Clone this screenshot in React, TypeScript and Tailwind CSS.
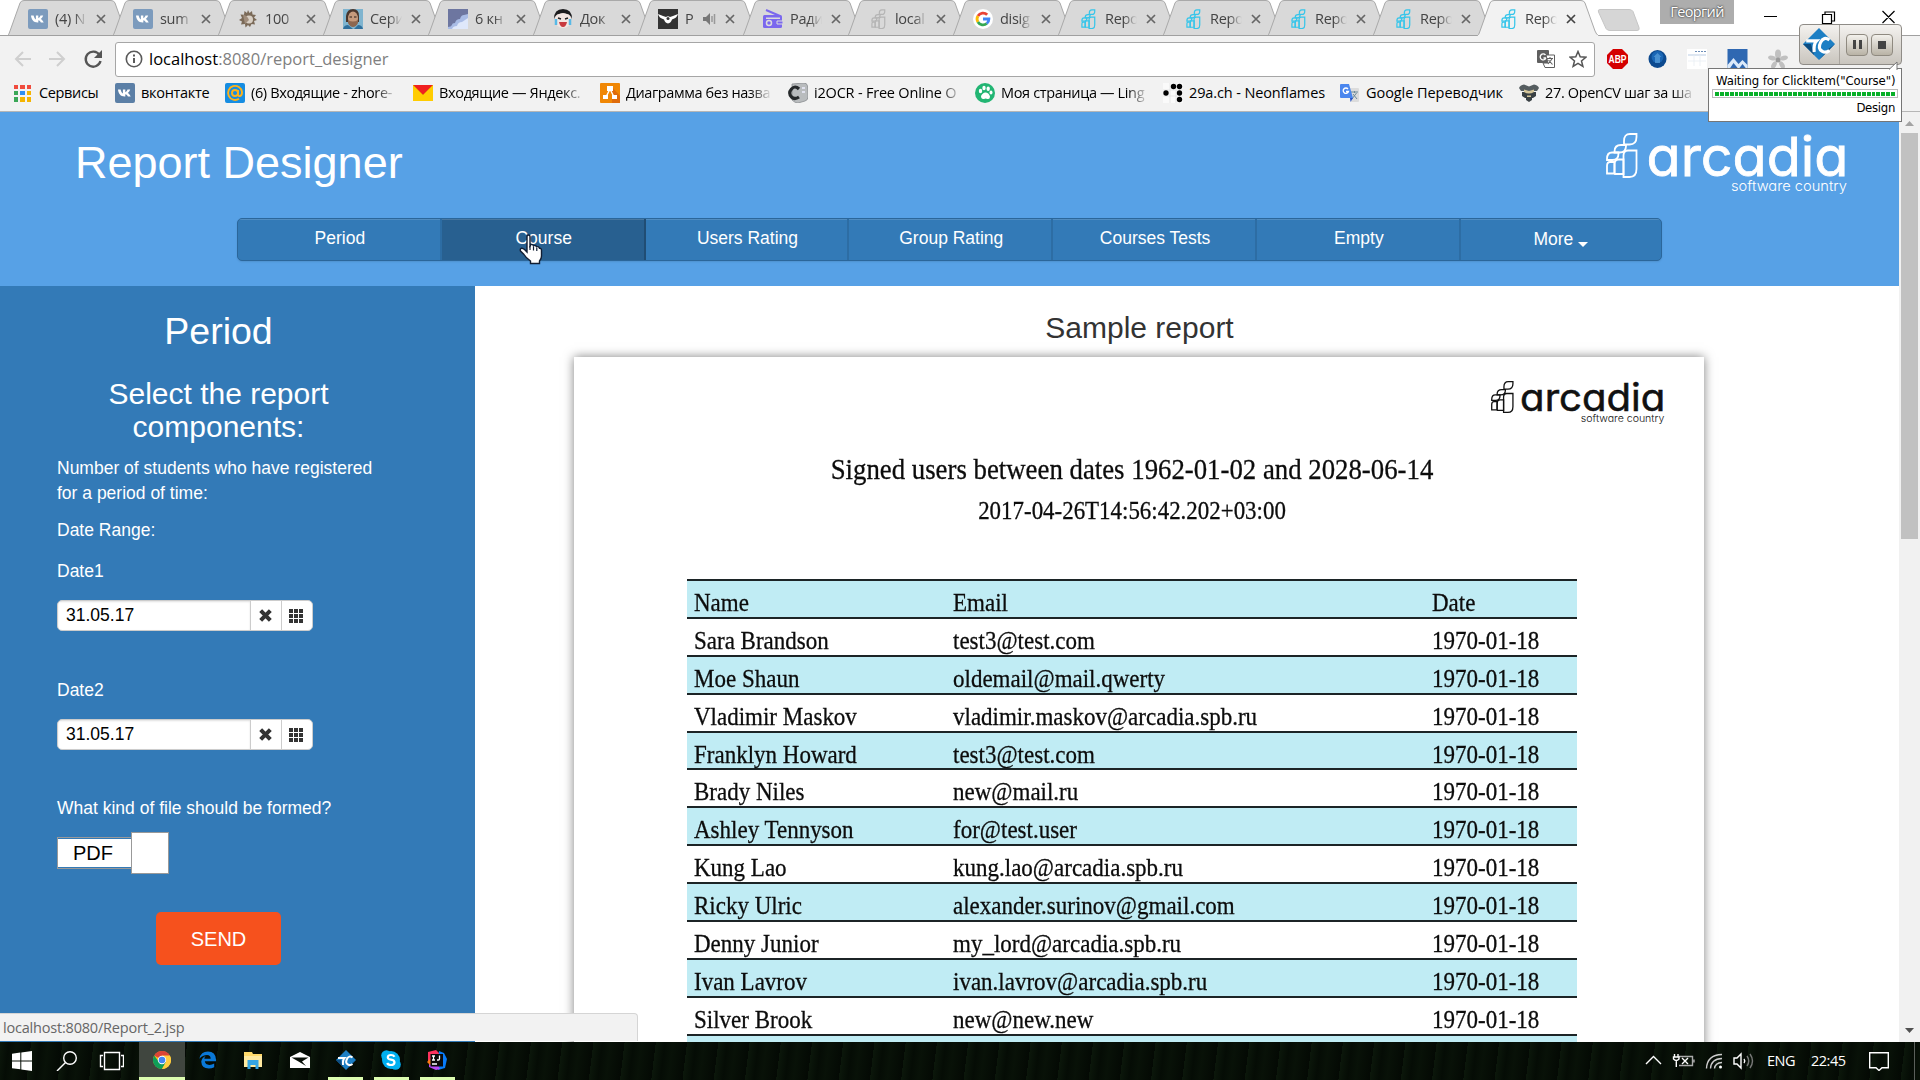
import React from "react";

const UI = "font-['Open_Sans','Noto_Sans',sans-serif]";

/* ---------- small icons ---------- */

const VK = ({ c = "#5b7fa6" }: { c?: string }) => (
  <svg width="20" height="20" viewBox="0 0 20 20">
    <rect width="20" height="20" rx="2" fill={c} />
    <path d="M3 6.5h2.6c.5 2.2 1.500 3.700 2.300 4V6.500H10.300v2.700c1-.3 1.700-1.400 2.200-2.700h2.700c-.5 1.500-1.300 2.700-2.500 3.500 1.300.7 2.400 1.900 3 3.500h-2.800c-.5-1.100-1.300-2-2.600-2.200v2.200h-.8C5.700 13.500 3.300 10.700 3 6.500z" fill="#fff" />
  </svg>
);

const Gear = () => (
  <svg width="20" height="20" viewBox="0 0 20 20">
    <path d="M10 1l1.500 3L14 2l.5 3.500L18 6l-2 2.500 3 2.500-3 1 1 3.500-3.500-.5L12 18l-2-2-2.500 2.500L7 15l-4 .5 1-3-3-1.500 3-2L2.500 5.500 6 5.700 6.500 2 9 4z" fill="#7b6a58" />
    <circle cx="11" cy="10.500" r="4" fill="#d8cfc4" />
    <path d="M5 6q4 0 6 5l-4 4z" fill="#a08d7c" />
  </svg>
);

const Portrait = () => (
  <svg width="20" height="20" viewBox="0 0 20 20">
    <rect width="20" height="20" fill="#7fb4cf" />
    <path d="M3 7Q4 0 10 0t6 7v6H3z" fill="#4a362c" />
    <ellipse cx="10" cy="9.500" rx="5" ry="7" fill="#c69a7c" />
    <path d="M5 11q5 3 10 0v3q-2 4-5 4t-5-4z" fill="#8d6750" />
    <path d="M6.500 8h2.500M11 8h2.500" stroke="#2b1d17" strokeWidth="1.200" />
    <path d="M0 20q1-4 5-4l5 4zM20 20q-1-4-5-4l-4 4z" fill="#2f6f9c" />
  </svg>
);

const Cloud = () => (
  <svg width="20" height="20" viewBox="0 0 20 20">
    <rect width="20" height="20" fill="#6d76a0" />
    <path d="M0 20v-2q3 0 4-2 0-2 3-2 1-4 5-4 1-4 4-4l4-1v15z" fill="#a9bce6" />
    <path d="M4 20q1-3 5-3 1-4 5-4l6-4v11z" fill="#dfe8fb" />
  </svg>
);

const CryFace = () => (
  <svg width="20" height="20" viewBox="0 0 20 20">
    <circle cx="10" cy="11" r="8" fill="#f3e6e2" />
    <path d="M1 10Q1 0 10 0t9 10q-2-5-5-5-4-2-8 0-3 0-5 5z" fill="#1d1d1f" />
    <path d="M5 9l3 1M15 9l-3 1" stroke="#222" strokeWidth="1.500" />
    <path d="M6 13h8q-1 5-4 5t-4-5z" fill="#c83a3f" />
    <path d="M3 10v6M17 10v6" stroke="#58b9e6" strokeWidth="2.500" />
  </svg>
);

const Wings = () => (
  <svg width="20" height="20" viewBox="0 0 20 20">
    <rect width="20" height="20" fill="#333" />
    <path d="M0 5l5 2 3 1q2-1.500 4 0l3-1 5-2q-1 4-6 5.500-1 3.500-4 4-3-.5-4-4Q1 9 0 5z" fill="#fff" />
    <circle cx="10" cy="9.500" r="1.500" fill="#333" />
  </svg>
);

const Radio = () => (
  <svg width="20" height="20" viewBox="0 0 20 20">
    <path d="M3 1l14 6" stroke="#7b68ee" strokeWidth="2" />
    <rect y="6" width="19" height="13" rx="1.500" fill="#7b68ee" />
    <circle cx="6" cy="14" r="2.500" fill="none" stroke="#dcdcdc" strokeWidth="1.500" />
    <path d="M3 8.500h14v1.500H3z" fill="#dcdcdc" />
    <path d="M14 12h6v3h-6z" fill="#7b68ee" stroke="#dcdcdc" />
  </svg>
);

const Google = () => (
  <svg width="20" height="20" viewBox="0 0 20 20">
    <circle cx="10" cy="10" r="10" fill="#fff" />
    <g fill="none" strokeWidth="2.800">
      <path d="M14.200 5.800A5.900 5.900 0 0 0 4.900 7" stroke="#ea4335" />
      <path d="M4.900 7a5.900 5.900 0 0 0 0 6" stroke="#fbbc05" />
      <path d="M4.900 13a5.900 5.900 0 0 0 8.900 1.500" stroke="#34a853" />
      <path d="M13.800 14.500A5.900 5.900 0 0 0 15.900 10H10" stroke="#4285f4" />
    </g>
  </svg>
);

const LeafPaths = () => (
  <>
    <path d="M18 11V8q0-7 6-7h6.500v3q0 7.500-7 7.500H18z" />
    <path d="M8.500 19.500v-1q0-6.500 6.500-6.500h5v1q0 6.500-6.500 6.500z" />
    <path d="M1 27v-1q0-6.500 5-6.500h6.500v1q0 6.500-6 6.500z" />
    <path d="M17.500 44V22.500q0-5 4.500-5h8.500V36q0 8-7 8z" />
    <path d="M8.500 40.500V31q0-4.500 4-4.500h5V41H9z" />
    <path d="M1 39.500V33q0-4 3-4h4.500v11.500H1z" />
  </>
);

const Leaf = ({ c = "#35c5ea" }: { c?: string }) => (
  <svg width="20" height="20" viewBox="-6 -1 42 46" fill="none" stroke={c} strokeWidth="2.800">
    <LeafPaths />
  </svg>
);

const Close = ({ dark }: { dark?: boolean }) => (
  <svg width="10" height="10" viewBox="0 0 10 10" stroke={dark ? "#444" : "#666"} strokeWidth="1.700">
    <path d="M1 1l8 8M9 1l-8 8" />
  </svg>
);

/* ---------- tab strip ---------- */

type TabInfo = { icon: React.ReactNode; text: string; audio?: boolean; active?: boolean };

const tabs: TabInfo[] = [
  { icon: <VK c="#7c9bbd" />, text: "(4) N" },
  { icon: <VK c="#7c9bbd" />, text: "sum" },
  { icon: <Gear />, text: "100" },
  { icon: <Portrait />, text: "Сери" },
  { icon: <Cloud />, text: "6 кн" },
  { icon: <CryFace />, text: "Док" },
  { icon: <Wings />, text: "Р", audio: true },
  { icon: <Radio />, text: "Ради" },
  { icon: <Leaf c="#b5b5b5" />, text: "local" },
  { icon: <Google />, text: "disig" },
  { icon: <Leaf />, text: "Repo" },
  { icon: <Leaf />, text: "Repo" },
  { icon: <Leaf />, text: "Repo" },
  { icon: <Leaf />, text: "Repo" },
  { icon: <Leaf />, text: "Repo", active: true },
];

const Tab = ({ t }: { t: TabInfo }) => (
  <div className="relative -mr-[17px] flex h-9 w-[122px] shrink-0 items-start pl-[21px] pt-[9px]">
    <svg className="absolute left-0 top-0" width="122" height="36" viewBox="0 0 122 36">
      <path d="M0 36Q2 35 3 31L13 3Q14 .5 17 .5H104Q107 .5 108 3L118 31Q119.500 35 122 36z" fill={t.active ? "#f2f2f2" : "#d9d9d9"} stroke="#a9a9a9" />
      {t.active ? <path d="M1 35.700h120" stroke="#f2f2f2" strokeWidth="1.500" /> : <path d="M0 35.500h122" stroke="#a0a0a0" />}
    </svg>
    <span className="relative">{t.icon}</span>
    <span className={`relative ml-[7px] h-5 overflow-hidden whitespace-nowrap text-[14.500px] leading-5 tracking-[-0.3px] text-[#444] mask-r-from-60% ${t.audio ? "w-[12px]" : "w-[32px]"}`}>{t.text}</span>
    {t.audio && (
      <svg className="relative ml-[6px] mt-1" width="14" height="12" viewBox="0 0 14 12">
        <path d="M0 4h3l4-4v12L3 8H0z" fill="#777" />
        <path d="M9 3v6M11.500 1v10" stroke="#999" strokeWidth="1.500" />
      </svg>
    )}
    <span className={`relative mt-[5px] ${t.audio ? "ml-[8px]" : "ml-[9px]"}`}><Close dark={t.active} /></span>
  </div>
);

const TabStrip = () => (
  <div className="flex h-9 border-b border-[#a0a0a0] bg-white">
    <div className="flex h-9 pl-[7px]">
      {tabs.map((t, i) => <Tab key={i} t={t} />)}
    </div>
    <svg className="ml-[15px] mt-[9px] shrink-0" width="44" height="22" viewBox="0 0 44 22">
      <path d="M3 .5h29q3 0 4 2l6 16q1 3-2 3H13q-3 0-4-2L1.500 3Q.5.500 3 .5z" fill="#d6d6d6" stroke="#c6c6c6" />
    </svg>
    <div className="ml-[19px] h-6 w-[74px] shrink-0 bg-[#adadad] text-center text-[14.500px] leading-[23px] tracking-[-0.650px] text-white [text-shadow:0_0_2px_#444,0_0_2px_#444]">Георгий</div>
    <svg className="ml-[30px] mt-[10px] shrink-0" width="132" height="15" viewBox="0 0 132 15" fill="none" stroke="#000" strokeWidth="1.200">
      <path d="M0 6.500h13M58.500 4.500h9v9h-9zM61 4.500V2h9.500v9H68M118.500 1l12 12M130.500 1l-12 12" />
    </svg>
  </div>
);

/* ---------- address bar ---------- */

const Toolbar = () => (
  <div className="flex h-[42px] items-center bg-[#f2f2f2] pl-[14px] pt-[4px]">
    <svg width="90" height="20" viewBox="0 0 90 20" fill="none" strokeWidth="2" className="shrink-0">
      <path d="M17 10H2M9 3l-7 7 7 7M35 10h15M43 3l7 7-7 7" stroke="#cfcfcf" />
      <path d="M85.500 6A7.500 7.500 0 1 0 86.500 12" stroke="#555" strokeWidth="2.400" />
      <path d="M88 1v8h-8z" fill="#555" />
    </svg>
    <div className="ml-[11px] flex h-[35px] w-[1480px] shrink-0 items-center rounded-[3px] border border-[#a6a6a6] bg-white pl-[9px] pr-[7px]">
      <svg width="18" height="18" viewBox="0 0 18 18" fill="none" stroke="#5a5a5a" strokeWidth="1.600">
        <circle cx="9" cy="9" r="7.700" />
        <path d="M9 8v5M9 4.500v2" strokeWidth="2" />
      </svg>
      <span className="ml-[6px] text-[16.500px] leading-5 text-[#808080]"><span className="text-black">localhost</span>:8080/report_designer</span>
      <svg className="ml-auto" width="18" height="18" viewBox="0 0 18 18">
        <rect width="12" height="13" rx="1" fill="#5f5f5f" />
        <path d="M8.500 5A3 3 0 1 0 9 8H6.500" stroke="#fff" strokeWidth="1.300" fill="none" />
        <path d="M9 5h8.500v12.500H8L6 13h5z" fill="#fff" stroke="#5f5f5f" />
        <path d="M10 8.500h6M13 7v2M11 14l4-5M11.500 10l4 4.500" stroke="#5f5f5f" strokeWidth="1.100" fill="none" />
      </svg>
      <svg className="ml-[14px]" width="18" height="18" viewBox="0 0 18 18">
        <path d="M9 1.500l2.200 5.300 5.600.4-4.300 3.700 1.400 5.500L9 13.400l-4.900 3 1.400-5.500L1.200 7.200l5.600-.4z" fill="none" stroke="#555" strokeWidth="1.500" />
      </svg>
    </div>
    <div className="ml-[12px] flex shrink-0 items-center gap-5">
      <svg width="21" height="20" viewBox="0 0 21 20">
        <path d="M6 0h9l6 6v8l-6 6H6l-6-6V6z" fill="#d40000" />
        <text x="10.500" y="14" fontSize="11" fontWeight="700" textAnchor="middle" fill="#fff" textLength="18" lengthAdjust="spacingAndGlyphs" fontFamily="Liberation Sans">ABP</text>
      </svg>
      <svg width="19" height="20" viewBox="0 0 19 20">
        <circle cx="9.500" cy="10" r="9" fill="#0d4a8f" />
        <circle cx="9.500" cy="8" r="6" fill="#1a66b5" />
        <path d="M9.500 4l4 4h-1.500v6h-5V8H5.500z" fill="#6fb2e8" opacity=".55" />
      </svg>
      <svg width="20" height="20" viewBox="0 0 20 20">
        <rect width="20" height="20" fill="#fff" />
        <path d="M8 2.500h11" stroke="#6e8fb8" strokeDasharray="2 1" />
        <path d="M1 6h18" stroke="#a9c0dd" strokeWidth=".8" />
        <path d="M1 12h18M7 6v11M13 6v11" stroke="#e8edf4" strokeWidth=".8" />
      </svg>
      <svg width="21" height="20" viewBox="0 0 20 20">
        <rect width="20" height="20" fill="#2f68b2" />
        <path d="M0 16l6-7 5 6 4-4 5 5v4H0z" fill="#dceafa" />
        <path d="M2 20l4-6 5 6zM12 19l3-4 4 5h-6z" fill="#2f68b2" />
      </svg>
      <svg width="20" height="20" viewBox="0 0 20 20" fill="#c0c0c0">
        <ellipse cx="10" cy="5" rx="3" ry="4.500" />
        <ellipse cx="4" cy="9" rx="4" ry="2.300" transform="rotate(15 4 9)" />
        <ellipse cx="16" cy="9" rx="4" ry="2.300" transform="rotate(-15 16 9)" />
        <ellipse cx="6" cy="16" rx="2.300" ry="4" transform="rotate(30 6 16)" />
        <ellipse cx="14" cy="16" rx="2.300" ry="4" transform="rotate(-30 14 16)" />
        <circle cx="10" cy="11" r="2.500" fill="#999" />
      </svg>
    </div>
  </div>
);

/* ---------- bookmarks ---------- */

const dots = ["#f04c3e", "#f04c3e", "#f04c3e", "#3aa757", "#2f8ef0", "#f5b400", "#3aa757", "#f5b400", "#f5b400"];

const AppsGrid = () => (
  <div className="grid h-[17px] w-[17px] grid-cols-3 gap-[2px]">
    {dots.map((c, i) => <span key={i} style={{ background: c }} />)}
  </div>
);

const MailAt = () => (
  <svg width="20" height="20" viewBox="0 0 20 20">
    <rect width="20" height="20" rx="2" fill="#168de2" />
    <g fill="none" stroke="#ffb219" strokeWidth="1.900">
      <circle cx="10" cy="10" r="3" />
      <path d="M13 7v4.500q.5 2 2.200 1.500 2-1 1.800-4A7 7 0 1 0 14 15.700" />
    </g>
  </svg>
);

const Yandex = () => (
  <svg width="20" height="20" viewBox="0 0 20 20">
    <rect y="2" width="20" height="16" fill="#fc0" />
    <path d="M0 2h20L10 12z" fill="#f02020" />
    <path d="M0 2l10 10L20 2" fill="none" stroke="#e0a800" strokeWidth=".6" />
  </svg>
);

const Draw = () => (
  <svg width="20" height="20" viewBox="0 0 20 20">
    <rect width="20" height="20" rx="1" fill="#f08705" />
    <path d="M12 4l8 9v7h-8z" fill="#df6c0c" />
    <path d="M10 6l-4 8M10 6l4 8" stroke="#fff" strokeWidth="1.400" />
    <path d="M7 3h6v5H7zM3 12h5v4H3zM12 12h5v4h-5z" fill="#fff" />
  </svg>
);

const Ocr = () => (
  <svg width="20" height="20" viewBox="0 0 20 20">
    <path d="M4 1l12-1q3 0 3.500 3L20 14q0 3-3 4l-7 2q-3 0-6-3z" fill="#b9bcbe" stroke="#8a8d90" strokeWidth=".8" />
    <path d="M11 6Q7 2 3.500 6t0 8q3 3 7.500 0" fill="none" stroke="#26292b" strokeWidth="3.200" />
    <path d="M14 5h3M14 9h3" stroke="#eef" strokeWidth="1.500" />
  </svg>
);

const Paw = () => (
  <svg width="20" height="20" viewBox="0 0 20 20">
    <circle cx="10" cy="10" r="10" fill="#22b573" />
    <g fill="#fff">
      <ellipse cx="5.500" cy="8" rx="1.700" ry="2.300" />
      <ellipse cx="9" cy="5" rx="1.700" ry="2.300" />
      <ellipse cx="13.200" cy="5.700" rx="1.700" ry="2.300" />
      <ellipse cx="16" cy="9.500" rx="1.500" ry="2" />
      <path d="M6 13q2-4 5-3.500t4 4q0 3-2.500 2.500-2-1-3.500 0-3 .5-3-3z" />
    </g>
  </svg>
);

const Dots29 = () => (
  <svg width="20" height="20" viewBox="0 0 20 20">
    <rect width="20" height="20" fill="#fafafa" />
    <path d="M0 7h20M0 13h20M7 0v20M13 0v20" stroke="#ddd" strokeWidth=".7" />
    <circle cx="10.500" cy="3.500" r="2.700" /><circle cx="16.500" cy="3.500" r="2.700" /><circle cx="3" cy="10" r="2.700" />
    <circle cx="16.500" cy="10" r="2.700" /><circle cx="16.500" cy="16.500" r="2.700" />
  </svg>
);

const Translate = () => (
  <svg width="20" height="20" viewBox="0 0 20 20">
    <path d="M8 5h10q1 0 1 1v12q0 1-1 1h-7z" fill="#dcdcdc" />
    <path d="M11 9h7M14.500 8v2M12 16l4.500-6M13 11l4 5" stroke="#6b8a99" fill="none" />
    <path d="M1 1h8l4 14H1q-1 0-1-1V2q0-1 1-1z" fill="#4a86ee" />
    <path d="M10 15h3l-2.500 4z" fill="#2a56c6" />
    <path d="M8 6a2.700 2.700 0 1 0 .5 2.500H6" stroke="#fff" strokeWidth="1.300" fill="none" />
  </svg>
);

const Shield = () => (
  <svg width="20" height="20" viewBox="0 0 20 20">
    <path d="M0 5q1-3 5-3.500l5 2 5-2q4 .5 5 3.500l-2 3H2z" fill="#555d60" />
    <path d="M3 9h14v4l-3 2H6l-3-2zM7 15h6v2l-3 2-3-2z" fill="#394044" />
    <path d="M5 6.500l5 1.500 5-1.500v2.500q-5 3-10 0zM8 12.500h4v1.500H8z" fill="#d5c69a" />
  </svg>
);

const bookmarks: [React.ReactNode, string, string, string][] = [
  [<AppsGrid />, "Сервисы", "w-[101px]", "w-[64px] ml-[8px] tracking-[-0.350px]"],
  [<VK />, "вконтакте", "w-[110px]", "w-[76px] ml-[6px] tracking-[-0.3px]"],
  [<MailAt />, "(6) Входящие - zhore-", "w-[188px]", "w-[146px] ml-[6px] tracking-[-0.350px] mask-r-from-85%"],
  [<Yandex />, "Входящие — Яндекс.", "w-[187px]", "w-[146px] ml-[6px] tracking-[-0.350px] mask-r-from-85%"],
  [<Draw />, "Диаграмма без назва", "w-[188px]", "w-[146px] ml-[6px] tracking-[-0.4px] mask-r-from-85%"],
  [<Ocr />, "i2OCR - Free Online O", "w-[187px]", "w-[148px] ml-[6px] tracking-[-0.200px] mask-r-from-85%"],
  [<Paw />, "Моя страница — Ling", "w-[188px]", "w-[148px] ml-[6px] tracking-[-0.350px] mask-r-from-85%"],
  [<Dots29 />, "29a.ch - Neonflames", "w-[177px]", "w-[145px] ml-[6px] tracking-[-0.120px]"],
  [<Translate />, "Google Переводчик", "w-[179px]", "w-[145px] ml-[6px] tracking-[-0.060px]"],
  [<Shield />, "27. OpenCV шаг за ша", "w-[180px]", "w-[150px] ml-[6px] tracking-[-0.350px] mask-r-from-85%"],
];

const Bookmarks = () => (
  <div className="flex h-[34px] items-center border-b border-[#b6b6b6] bg-[#f2f2f2] pb-[3px] pl-[14px]">
    {bookmarks.map(([icon, text, w, tw], i) => (
      <div key={i} className={`flex shrink-0 items-center ${w}`}>
        {icon}
        <span className={`overflow-hidden whitespace-nowrap text-[14.500px] leading-6 text-black ${tw}`}>{text}</span>
      </div>
    ))}
  </div>
);

/* ---------- page ---------- */

const Arcadia = ({ color, width, height }: { color: string; width: number; height: number }) => (
  <svg width={width} height={height} viewBox="0 0 242 63" preserveAspectRatio="none" className="block overflow-visible">
    <g fill="none" stroke={color} strokeWidth="1.800"><LeafPaths /></g>
    <text x="40.500" y="42.500" fill={color} fontSize="54" fontWeight="400" stroke={color} strokeWidth=".8" fontFamily="Inter" textLength="202" lengthAdjust="spacingAndGlyphs" style={{ fontFeatureSettings: "'cv11' 1" }}>arcadia</text>
    <text x="125" y="58" fill={color} fontSize="14.500" fontWeight="300" fontFamily="Inter" textLength="116" lengthAdjust="spacingAndGlyphs" style={{ fontFeatureSettings: "'cv11' 1" }}>software country</text>
  </svg>
);

const nav = ["Period", "Course", "Users Rating", "Group Rating", "Courses Tests", "Empty", "More"];

const Header = () => (
  <header className="h-[174px] bg-[#57a1e6]">
    <div className="flex h-[106px] items-start justify-between pl-[75px] pr-[51px]">
      <h1 className="pt-[26px] text-[45px] leading-[50px] text-white">Report Designer</h1>
      <div className="pt-[21px]"><Arcadia color="#fff" width={242} height={63} /></div>
    </div>
    <nav className="ml-[237px] flex h-[43px] w-[1425px] overflow-hidden rounded-[5px] border border-[#2b669a] bg-[#337ab7] shadow-[0_1px_2px_rgba(0,0,0,0.1)]">
      {nav.map((n, i) => (
        <div
          key={n}
          className={`flex justify-center pt-[6px] text-[17.500px] leading-[26px] text-white shadow-[inset_0_1px_0_rgba(255,255,255,0.15)] ${i < 6 ? "w-[203.800px] border-r-2 pl-[2px]" : "flex-1 pt-[7px]"} ${i === 1 ? "border-[#204d74] bg-[#286090]" : "border-[#2d6da4]"}`}
        >
          {n}
          {n === "More" && <span className="ml-[5px] mt-[16px] h-0 w-0 border-x-[5px] border-t-[5px] border-x-transparent border-t-white" />}
        </div>
      ))}
    </nav>
  </header>
);

const DateField = () => (
  <div className="flex h-[31px] w-[256px] overflow-hidden rounded-[5px] border border-[#ccc] bg-white">
    <div className="w-[192px] pl-[8px] text-[17.500px] leading-[28px] text-black shadow-[inset_0_1px_2px_rgba(0,0,0,0.12)]">31.05.17</div>
    <div className="flex w-[31px] items-center justify-center border-l border-[#ccc] pr-[1px]">
      <svg width="13" height="13" viewBox="0 0 14 14" stroke="#333" strokeWidth="4.400"><path d="M1.800 1.800l10.400 10.400M12.200 1.800L1.800 12.200" /></svg>
    </div>
    <div className="flex w-[30px] items-center justify-center border-l border-[#ccc] pr-[1px]">
      <div className="grid h-[14px] w-[14px] grid-cols-3 gap-[1px]">
        {dots.map((_, i) => <span key={i} className="bg-[#333]" />)}
      </div>
    </div>
  </div>
);

const Sidebar = () => (
  <aside className="h-[756px] w-[475px] shrink-0 bg-[#337ab7] text-white">
    <div className="w-[437px] text-center">
      <h2 className="pt-[24px] text-[37.500px] leading-[42px]">Period</h2>
      <h3 className="mx-auto mt-[25px] w-[300px] text-[30px] leading-[33px]">Select the report components:</h3>
    </div>
    <div className="pl-[57px] text-[17.500px] leading-[25px]">
      <p className="mt-[13px] w-[340px]">Number of students who have registered for a period of time:</p>
      <p className="mt-[12px]">Date Range:</p>
      <p className="mb-[16px] mt-[16px]">Date1</p>
      <DateField />
      <p className="mb-[16px] mt-[47px]">Date2</p>
      <DateField />
      <p className="mt-[46px]">What kind of file should be formed?</p>
      <div className="mt-[11px] flex h-[42px] items-center">
        <div className="h-8 w-[75px] border border-r-0 border-[#999] pt-[1px]">
          <div className="h-[28px] bg-white pl-[15px] text-[20px] leading-[28px] text-black">PDF</div>
        </div>
        <div className="-ml-[1px] h-[42px] w-[38px] border border-[#999] bg-white" />
      </div>
    </div>
    <div className="ml-[156px] mt-[38px] h-[53px] w-[125px] rounded-[5px] bg-[#f6511d] text-center text-[20px] leading-[54px]">SEND</div>
  </aside>
);

const rows: [string, string, string][] = [
  ["Name", "Email", "Date"],
  ["Sara Brandson", "test3@test.com", "1970-01-18"],
  ["Moe Shaun", "oldemail@mail.qwerty", "1970-01-18"],
  ["Vladimir Maskov", "vladimir.maskov@arcadia.spb.ru", "1970-01-18"],
  ["Franklyn Howard", "test3@test.com", "1970-01-18"],
  ["Brady Niles", "new@mail.ru", "1970-01-18"],
  ["Ashley Tennyson", "for@test.user", "1970-01-18"],
  ["Kung Lao", "kung.lao@arcadia.spb.ru", "1970-01-18"],
  ["Ricky Ulric", "alexander.surinov@gmail.com", "1970-01-18"],
  ["Denny Junior", "my_lord@arcadia.spb.ru", "1970-01-18"],
  ["Ivan Lavrov", "ivan.lavrov@arcadia.spb.ru", "1970-01-18"],
  ["Silver Brook", "new@new.new", "1970-01-18"],
  ["", "", ""],
];

const Cell = ({ w, children }: { w: string; children: React.ReactNode }) => (
  <div className={`${w} shrink-0`}><span className="inline-block origin-left scale-x-[0.913] whitespace-nowrap">{children}</span></div>
);

const Report = () => (
  <main className="h-[756px] w-[1424px] overflow-hidden bg-white">
    <h2 className="pt-[24px] pr-[95px] text-center text-[30px] leading-[36px] text-[#333]">Sample report</h2>
    <div className="ml-[99px] mt-[11px] h-[800px] w-[1130px] bg-white font-['Liberation_Serif',serif] text-[25.200px] text-[#0c0c0c] shadow-[0_0_10px_rgba(0,0,0,0.5)] [-webkit-text-stroke:0.3px_#0c0c0c]">
      <div className="flex justify-end pr-[39px] pt-[24px] [-webkit-text-stroke:0px]"><Arcadia color="#111" width={174} height={45} /></div>
      <div className="pr-[14px] text-center">
        <p className="scale-x-[0.91] pt-[25px] text-[29.450px] leading-[36px]">Signed users between dates 1962-01-02 and 2028-06-14</p>
        <p className="scale-x-[0.91] pt-[9px] leading-[30px]">2017-04-26T14:56:42.202+03:00</p>
      </div>
      <div className="ml-[113px] mt-[53px] w-[890px]">
        {rows.map(([a, b, c], i) => (
          <div key={i} className={`flex h-[37.900px] border-t-[2px] border-[#1c2426] pl-[7px] leading-[43px] ${i % 2 ? "bg-white" : "bg-[#c0ecf4]"}`}>
            <Cell w="w-[259px]">{a}</Cell>
            <Cell w="w-[479px]">{b}</Cell>
            <Cell w="w-[120px]">{c}</Cell>
          </div>
        ))}
      </div>
    </div>
  </main>
);

const Scrollbar = () => (
  <div className="flex h-[930px] w-[21px] flex-col items-center bg-[#f1f1f1]">
    <svg width="9" height="5" viewBox="0 0 9 5" className="mt-[9px]"><path d="M0 5h9L4.500 0z" fill="#a3a3a3" /></svg>
    <div className="mt-[7px] h-[406px] w-[17px] bg-[#c1c1c1]" />
    <svg width="9" height="5" viewBox="0 0 9 5" className="mb-[9px] mt-auto"><path d="M0 0h9L4.500 5z" fill="#505050" /></svg>
  </div>
);

/* ---------- taskbar ---------- */

const TC = ({ size = 20 }: { size?: number }) => (
  <svg width={size} height={size} viewBox="0 0 20 20">
    <path d="M10 0l10 10-10 10L0 10z" fill="#1d7fc4" />
    <path d="M10 20L0 10h5l2 7zM10 20l10-10-4 3z" fill="#0c4c80" />
    <path d="M2 8h6.500q-2 2-1.500 7M16.500 7.500Q13 5 11 9t1 5.500q2 1.500 4.500-.5" stroke="#fff" strokeWidth="2" fill="none" />
  </svg>
);

const Chrome = () => (
  <svg width="18" height="18" viewBox="0 0 18 18">
    <circle cx="9" cy="9" r="9" fill="#fbc116" />
    <path d="M9 9L1.200 4.500A9 9 0 0 1 16.800 4.500z" fill="#db4437" />
    <path d="M1.200 4.500A9 9 0 0 0 9 18l4-7H6z" fill="#0f9d58" />
    <path d="M16.800 4.500H9v4.500l4 2-4 7A9 9 0 0 0 16.800 4.500z" fill="#ffcd40" />
    <circle cx="9" cy="9" r="4.200" fill="#fff" /><circle cx="9" cy="9" r="3.300" fill="#4285f4" />
  </svg>
);

const Edge = () => (
  <svg width="17" height="18" viewBox="0 0 19 19">
    <path d="M.5 8Q2 0 10 0q8.500 0 9 9v2H6.500q.5 4 5 4 3 0 5.500-1.500v4Q14 19 11 19 3 19 2.500 11.500 3 7 7.500 5 6 6.500 6 8h7q0-4-4-4Q4 4 .5 8z" fill="#0a78d7" />
  </svg>
);

const Folder = () => (
  <svg width="19" height="18" viewBox="0 0 19 18">
    <path d="M0 1h8l1 2h9v13H0z" fill="#ffd96b" />
    <path d="M0 5h18v11H0z" fill="#ffe9a0" />
    <path d="M3.500 18V9h11v9h-3v-4h-5v4z" fill="#35a5e5" />
  </svg>
);

const MailIcon = () => (
  <svg width="20" height="16" viewBox="0 0 20 16">
    <path d="M0 5l10-5 10 5v11H0z" fill="#fff" />
    <path d="M1.500 5.500h17l-6.500 4 4 4.500-7.500-4.500z" fill="#091008" />
  </svg>
);

const Skype = () => (
  <svg width="20" height="20" viewBox="0 0 20 20">
    <circle cx="10" cy="10" r="9" fill="#00aff0" /><circle cx="5.500" cy="5.500" r="5.300" fill="#00aff0" /><circle cx="14.500" cy="14.500" r="5.300" fill="#00aff0" />
    <path d="M13.500 6.800Q12.500 5 10 5q-3 0-3.200 2.200 0 2 3.200 2.500 3.500.5 3.500 2.800Q13.200 15 10 15q-3 0-3.800-2" fill="none" stroke="#fff" strokeWidth="2.200" />
  </svg>
);

const Idea = () => (
  <svg width="20" height="20" viewBox="0 0 20 20">
    <path d="M1 2l8-2 5 5-9 9-4-3z" fill="#fe315d" />
    <path d="M12 1l5 2 3 6-2 9-7 2z" fill="#087cfa" />
    <path d="M2 10l8 3 3 6-4 1-7-3z" fill="#b74af7" />
    <path d="M0 12l3-3 2 4-2 2z" fill="#f97a12" />
    <rect x="3.500" y="4" width="12.500" height="12.500" fill="#0b0b0b" />
    <path d="M5 6h3M6.500 6v4M5 10h3M12.500 5.500v3.200q0 1.300-1.200 1.300H10M5 14h5" stroke="#fff" strokeWidth="1.300" fill="none" />
  </svg>
);

const taskApps: { icon: React.ReactNode; run?: boolean; active?: boolean }[] = [
  { icon: <Chrome />, active: true },
  { icon: <Edge /> },
  { icon: <Folder /> },
  { icon: <MailIcon /> },
  { icon: <TC />, run: true },
  { icon: <Skype />, run: true },
  { icon: <Idea />, run: true },
];

const Taskbar = () => (
  <footer className="flex h-[38px] items-center bg-[#050c05] bg-[repeating-linear-gradient(97deg,rgba(24,44,22,0.35)_0px,rgba(4,10,4,0)_9px,rgba(16,30,14,0.3)_17px,rgba(2,5,2,0.4)_31px)]">
    <svg className="ml-[12px] shrink-0" width="112" height="20" viewBox="0 0 112 20">
      <path d="M0 2.800l8.300-1.200v7.800H0zM9.300 1.400L20 0v9.400H9.300zM0 10.500h8.300v7.800L0 17.200zM9.300 10.500H20V20L9.300 18.500z" fill="#fff" />
      <g fill="none" stroke="#fff" strokeWidth="1.400">
        <circle cx="58" cy="7" r="6.300" /><path d="M53.500 11.500L45 20" />
        <path d="M92.500 1.500h15v17h-15zM91 4.500h-2.500v11H91M109 4.500h2.500v11H109" />
      </g>
    </svg>
    <div className="ml-[15px] flex h-full">
      {taskApps.map((a, i) => (
        <div key={i} className={`flex h-full w-[45.900px] flex-col items-center ${a.active ? "bg-[#40463f]" : ""}`}>
          <div className="flex flex-1 items-center">{a.icon}</div>
          <div className={`h-[3px] ${a.active ? "w-full bg-[#dcfdb0]" : a.run ? "w-[35px] bg-[#dcfdb0]" : ""}`} />
        </div>
      ))}
    </div>
    <svg className="ml-auto shrink-0" width="110" height="20" viewBox="0 0 110 20" fill="none" stroke="#fff" strokeWidth="1.400">
      <path d="M1 13l7.500-7.500L16 13" />
      <path d="M34 5.500h13.500v9H34M49 8.500v3" stroke="#aaa" />
      <path d="M37 7l6 6M43 7l-6 6M29.500 3v3M33 3v3M28.500 6h5.500v2q-2.700 3-5.500 0zM31.300 9v7" stroke="#fff" />
      <path d="M61.500 17.500Q62 4 77 3.500M65.500 17.500Q66 8 77 7.500M69.500 17.500Q70 12 77 11.500" stroke="#ccc" />
      <circle cx="75.500" cy="16" r="1.500" fill="#fff" stroke="none" />
      <path d="M89 7h3l4-4v14l-4-4h-3zM99 8q1.500 2 0 4" />
      <path d="M102 5q3.500 5 0 10M105 3q5 7 0 14" stroke="#777" />
    </svg>
    <span className="ml-[12px] w-[44px] text-[14.500px] tracking-[-0.5px] text-white">ENG</span>
    <span className="w-[58px] text-[14.500px] tracking-[-0.5px] text-white">22:45</span>
    <svg width="20" height="20" viewBox="0 0 20 20" fill="none" stroke="#fff" strokeWidth="1.400" className="shrink-0"><path d="M.7 1.700h18.600v15H13L10 19.500 7 16.700H.7z" /></svg>
    <span className="ml-[25px] mr-[5px] h-full w-px bg-[#5a5f5a]" />
  </footer>
);

/* ---------- floating pieces ---------- */

const RecorderPanel = () => (
  <div className="absolute left-[1799px] top-[24px] flex h-[41px] w-[103px] items-center rounded-[4px] border border-[#8f8c87] bg-linear-to-b from-[#f4f2ef] to-[#c9c5be]">
    <div className="flex h-full w-[40px] items-center justify-center border-r border-[#aaa6a0] pb-[2px] pr-[2px]"><TC size={32} /></div>
    <div className="ml-[6px] flex h-[22px] w-[22px] items-center justify-center gap-[3px] rounded-[4px] border border-[#8f8a80] bg-linear-to-b from-[#f3f1ec] to-[#b9b3a6]">
      <span className="h-[9px] w-[3px] bg-[#444]" /><span className="h-[9px] w-[3px] bg-[#444]" />
    </div>
    <div className="ml-[3px] flex h-[22px] w-[22px] items-center justify-center rounded-[4px] border border-[#8f8a80] bg-linear-to-b from-[#f3f1ec] to-[#b9b3a6]">
      <span className="h-[8px] w-[8px] bg-[#444]" />
    </div>
  </div>
);

const bars = Array.from({ length: 37 });

const RecorderTip = () => (
  <div className="absolute left-[1708px] top-[68px] h-[54px] w-[194px] border border-[#767676] bg-white px-[3px] font-['DejaVu_Sans_Condensed','Noto_Sans',sans-serif] text-black">
    <svg className="absolute -top-[8px] right-[3px]" width="9" height="9" viewBox="0 0 9 9"><path d="M0 8.500L8 1v8" fill="#fff" stroke="#767676" /></svg>
    <p className="mt-[3px] whitespace-nowrap pl-[4px] text-[13px] leading-[17px] tracking-[-0.1px]">Waiting for ClickItem("Course")</p>
    <div className="flex h-[9px] items-center gap-[1px] border border-[#bbb] bg-white px-[2px]">
      {bars.map((_, i) => <span key={i} className="h-[4px] flex-1 bg-[#08b028]" />)}
    </div>
    <p className="mt-[2px] pr-[3px] text-right text-[13px] leading-[16px] tracking-[-0.3px]">Design</p>
  </div>
);

const HandCursor = () => (
  <svg className="absolute left-[519px] top-[234px]" width="24" height="31" viewBox="0 0 24 31">
    <path d="M8 2.500Q8 1 9.500 1T11 2.500V12l1-1.500q2-.5 2.500 1.500 2-1.500 3 .8 2.500-.8 3 1.500 2-.3 2 2V22q0 3-2 5v2.500h-9V27Q7 24 5 20.500L1.500 17q-.8-2 1-2.800 1.500-.2 3 1.300L8 18z" fill="#fff" stroke="#111e33" strokeWidth="1.400" />
    <path d="M11 12v4M14.500 13v3.500M17.800 14v3" stroke="#111e33" strokeWidth="1.200" />
  </svg>
);

export default function App() {
  return (
    <div className={`relative h-[1080px] w-[1920px] overflow-hidden bg-white ${UI}`}>
      <TabStrip />
      <Toolbar />
      <Bookmarks />
      <div className="flex h-[930px]">
        <div className="w-[1899px] font-['Liberation_Sans',Arial,sans-serif]">
          <Header />
          <div className="flex">
            <Sidebar />
            <Report />
          </div>
        </div>
        <Scrollbar />
      </div>
      <Taskbar />
      <HandCursor />
      <div className="absolute left-0 top-[1013px] h-[28px] w-[638px] rounded-tr-[4px] border-r border-t border-[#d5d5d5] bg-[#f2f2f2] pl-[3px] text-[14.500px] leading-[27px] tracking-[-0.2px] text-[#666]">localhost:8080/Report_2.jsp</div>
      <RecorderPanel />
      <RecorderTip />
    </div>
  );
}
